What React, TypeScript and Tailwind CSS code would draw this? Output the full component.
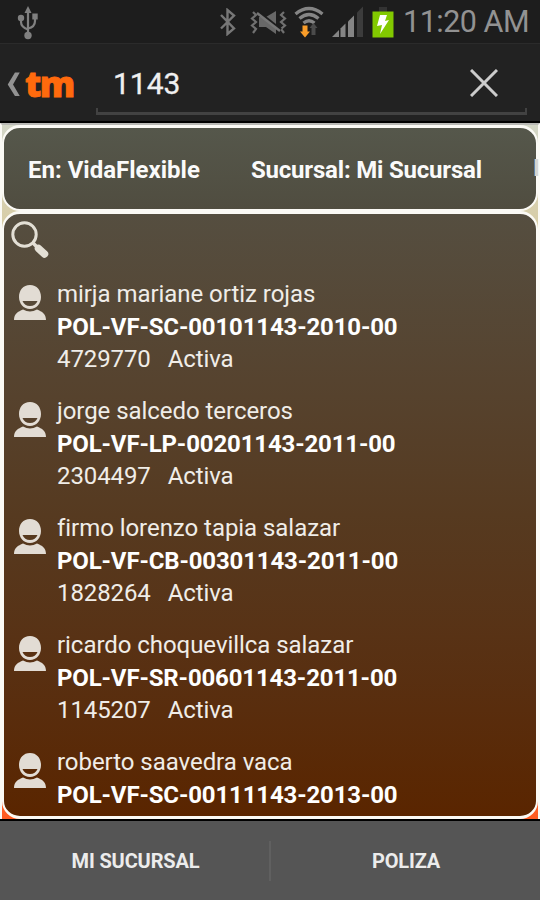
interface Policy {
  name: string;
  code: string;
  client: string;
  status: string;
}

const policies: Policy[] = [
  { name: "mirja mariane ortiz rojas", code: "POL-VF-SC-00101143-2010-00", client: "4729770", status: "Activa" },
  { name: "jorge salcedo terceros", code: "POL-VF-LP-00201143-2011-00", client: "2304497", status: "Activa" },
  { name: "firmo lorenzo tapia salazar", code: "POL-VF-CB-00301143-2011-00", client: "1828264", status: "Activa" },
  { name: "ricardo choquevillca salazar", code: "POL-VF-SR-00601143-2011-00", client: "1145207", status: "Activa" },
  { name: "roberto saavedra vaca", code: "POL-VF-SC-00111143-2013-00", client: "", status: "" },
];

const UsbIcon = () => (
  <svg className="h-[34px] w-[22px] shrink-0" viewBox="0 0 22 34" fill="none" stroke="#808080" strokeWidth="2.2">
    <path d="M11 5v24" />
    <path d="M4 12v4q0 5 7 7.500" />
    <path d="M18 10v5q0 6-7 7.500" />
    <path d="M11 0l3.500 7h-7z" fill="#808080" stroke="none" />
    <circle cx="4" cy="12" r="3.200" fill="#808080" stroke="none" />
    <path d="M15.300 7.500h5.400v6h-5.400z" fill="#808080" stroke="none" />
    <circle cx="11" cy="29.500" r="3.700" fill="#808080" stroke="none" />
  </svg>
);

const BluetoothIcon = () => (
  <svg className="h-7 w-[18px] shrink-0" viewBox="0 0 18 28" fill="none" stroke="#777" strokeWidth="2.400">
    <path d="M2 7l13 13.500-6.500 5.500V2L15 7.500 2 20.500" />
  </svg>
);

const VibrateIcon = () => (
  <svg className="h-7 w-[38px] shrink-0" viewBox="0 0 38 28">
    <g fill="none" stroke="#707070" strokeWidth="2.200">
      <path d="M3 4l3 3-4 3.500 4 3.500-4 3.500 4 3.500-3 4" />
      <path d="M34 4l-3 3 4 3.500-4 3.500 4 3.500-4 3.500 3 4" />
    </g>
    <path d="M9 9h7l10-6v23l-10-7H9z" fill="#686868" />
    <path d="M8 3.500l23 18" stroke="#1d1d1d" strokeWidth="2.500" />
    <path d="M7 5l23 18" stroke="#777" strokeWidth="2.500" />
  </svg>
);

const WifiIcon = () => (
  <svg className="h-8 w-[30px] shrink-0" viewBox="0 0 30 32">
    <g fill="none" stroke="#858585" strokeWidth="3.300">
      <path d="M1.500 8q13.500-11 27 0" />
      <path d="M5.500 12.500q9.500-8 19 0" />
      <path d="M9.500 17q5.500-4.500 11 0" />
    </g>
    <path d="M8.500 19.500h5v6h2.500l-5 6-5-6h2.500z" fill="#f99d29" />
    <path d="M17.500 29v-7h-2l4-5 4 5h-2v7z" fill="#4b4b4b" />
  </svg>
);

const SignalIcon = () => (
  <svg className="h-8 w-[32px] shrink-0" viewBox="0 0 32 32">
    <path d="M0 31l7-7v7z" fill="#858585" />
    <path d="M8.500 31v-8.500l5-5V31z" fill="#858585" />
    <path d="M16 31V15.500l6-6V31z" fill="#858585" />
    <path d="M25 31V6.500l6-6V31z" fill="#3c3c3c" />
  </svg>
);

const BatteryIcon = () => (
  <svg className="h-[32px] w-[22px] shrink-0" viewBox="0 0 22 32">
    <path d="M7 1h8v5H7z" fill="#333" />
    <path d="M0.500 5.500h21v26h-21z" fill="#82c900" />
    <path d="M8 9h7l-2 6 4-1-9 14 2-9-5 1z" fill="#fff" />
  </svg>
);

const SearchIcon = () => (
  <svg className="h-[38px] w-[38px] shrink-0" viewBox="0 0 38 38" fill="none" stroke="#e3dfd5">
    <circle cx="13.500" cy="13.500" r="11.700" strokeWidth="3" />
    <path d="M21.500 21.500l5 5" strokeWidth="3.500" />
    <path d="M27.500 27.500l6 5.500" strokeWidth="7.500" strokeLinecap="round" />
  </svg>
);

const PersonIcon = () => (
  <svg className="h-[36px] w-8 shrink-0" viewBox="0 0 32 36" fill="#e2dcd4">
    <path d="M0 35c0-6 4-8.500 9-10.500q7 4 14 0c5 2 9 4.500 9 10.500z" />
    <path
      fillRule="evenodd"
      d="M16 0C9 0 5 5.500 5 12s4.500 12 11 12 11-5.500 11-12S23 0 16 0zM8.500 16h15q-2 5-7.500 5t-7.500-5z"
    />
  </svg>
);

const StatusBar = () => (
  <div className="flex h-[43px] shrink-0 bg-[#1d1d1d]">
    <div className="flex w-[219px] shrink-0 pt-[6px] pl-[17px]">
      <UsbIcon />
    </div>
    <div className="flex w-[184px] shrink-0 pt-[8px]">
      <BluetoothIcon />
      <div className="ml-[13px]"><VibrateIcon /></div>
      <div className="-mt-[2px] ml-[6px]"><WifiIcon /></div>
      <div className="-mt-[2px] ml-[8px]"><SignalIcon /></div>
      <div className="-mt-[2px] ml-[8px]"><BatteryIcon /></div>
    </div>
    <span className="pt-[1px] text-[30.500px] leading-[42px] tracking-[-0.500px] whitespace-nowrap text-[#929292]">11:20 AM</span>
  </div>
);

const SearchHeader = () => (
  <div className="flex h-[78px] shrink-0 border-t border-[#2b2b2b] bg-[#222]">
    <div className="flex w-24 shrink-0 pl-[7px]">
      <svg className="mt-[28px] h-[25px] w-[13px]" viewBox="0 0 13 26" fill="#929292">
        <path d="M8 0.500h5L6 13l7 12H8L0.500 13z" />
      </svg>
      <span className="ml-[5px] pt-[19px] font-['Open_Sans',sans-serif] text-[35.500px] leading-[40px] font-extrabold tracking-[-1.700px] text-[#ff6a0d] [-webkit-text-stroke:0.800px_#ff6a0d]">
        tm
      </span>
    </div>
    <div className="mb-[6px] flex w-[431px] flex-col">
      <div className="flex flex-1 items-start justify-between pr-[29px] pl-[17px]">
        <span className="pt-[20px] text-[30px] leading-[40px] text-[#f0f0f0] [-webkit-text-stroke:0.300px_#f0f0f0]">1143</span>
        <svg className="mt-[25px] h-[28px] w-[28px]" viewBox="0 0 28 28" stroke="#ccc" strokeWidth="3">
          <path d="M1 1l26 26M27 1L1 27" />
        </svg>
      </div>
      <div className="h-[7px] border-x-2 border-b-[3px] border-[#424242]" />
    </div>
  </div>
);

const PolicyRow = ({ policy }: { policy: Policy }) => (
  <div className="flex h-[117px] shrink-0 text-[24px] leading-[32.500px] whitespace-nowrap text-[#f0ede8]">
    <div className="w-[43px] shrink-0 pt-[7px]">
      <PersonIcon />
    </div>
    <div>
      <p className="tracking-[-0.050px]">{policy.name}</p>
      <p className="font-bold tracking-[-0.150px] text-white">{policy.code}</p>
      <p className="tracking-[-0.100px]">
        {policy.client}
        <span className="ml-[17px]">{policy.status}</span>
      </p>
    </div>
  </div>
);

export default function App() {
  return (
    <div className="flex h-[900px] w-[540px] flex-col overflow-hidden bg-[#222] font-[Roboto,sans-serif]">
      <StatusBar />
      <SearchHeader />
      <main className="h-[700px] shrink-0 border-y-2 border-black">
        <div className="flex h-full flex-col border-x-2 border-t-2 border-x-[#fbfaf5] border-t-[#b9b9b5] bg-linear-to-b from-[#d3d6c6] via-[#d8cda5] via-15% to-[#ff5b20]">
          <div className="flex h-[86px] shrink-0 items-center rounded-[18px] border-x-2 border-t-[3px] border-b-2 border-[#fbfaf5] bg-linear-to-b from-[#55574b] to-[#504d40] pt-[2px] pl-[24px] text-[24px] font-bold whitespace-nowrap text-[#fafafa]">
            <span className="w-[223px] shrink-0">En: VidaFlexible</span>
            <span className="w-[282px] shrink-0 tracking-[-0.200px]">Sucursal: Mi Sucursal</span>
            <span className="text-[23px] text-[#d5d5d0]">I</span>
          </div>
          <div className="flex h-[608px] shrink-0 flex-col overflow-hidden rounded-[18px] border-x-2 border-y-[3px] border-[#fbfaf5] bg-linear-to-b from-[#554e40] via-[#563a20] via-50% to-[#5a2500]">
            <div className="flex h-[64px] shrink-0 pt-[7px] pl-[7px]">
              <SearchIcon />
            </div>
            <div className="flex flex-col pl-[10px]">
              {policies.map((policy) => (
                <PolicyRow key={policy.code} policy={policy} />
              ))}
            </div>
          </div>
        </div>
      </main>
      <footer className="flex flex-1 items-center bg-[#555] text-[20px] font-bold tracking-[-0.150px] text-[#ececec]">
        <div className="flex h-10 w-[271px] items-center justify-center border-r-2 border-[#606060] pl-[2px]">MI SUCURSAL</div>
        <div className="flex h-10 flex-1 items-center justify-center pl-[1px]">POLIZA</div>
      </footer>
    </div>
  );
}
